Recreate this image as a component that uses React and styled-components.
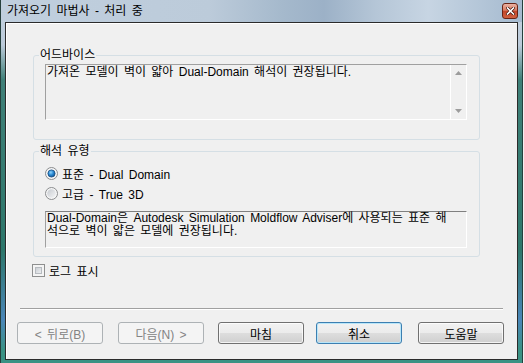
import React from 'react';
import styled, { createGlobalStyle } from 'styled-components';

const GlobalStyle = createGlobalStyle`
  html, body {
    margin: 0;
    padding: 0;
    background: #f0f0f0;
  }
  body {
    width: 524px;
    height: 363px;
    overflow: hidden;
    font-family: "Liberation Sans", "Noto Sans CJK KR", sans-serif;
    font-size: 12px;
    word-spacing: 2px;
    color: #000;
  }
`;

const Window = styled.div`
  width: 523px;
  height: 363px;
  box-sizing: border-box;
  border-left: 1px solid #26403d;
  border-right: 1px solid #26403d;
  background: linear-gradient(180deg, #c3d1df 0px, #bccbda 45px, #3f8078 80px, #2d776b 250px, #4a86b8 320px, #3a9284 350px);
  display: flex;
  flex-direction: column;
`;

const TitleBar = styled.div`
  height: 22px;
  flex-shrink: 0;
  display: flex;
  align-items: center;
  justify-content: space-between;
  padding: 0 4px 0 6px;
  background: linear-gradient(90deg, #c0cfde 0%, #bccbda 40%, #a5b9cc 54%, #9cb1c7 62%, #b5c6d7 72%, #c7d5e3 82%, #b4c6d8 92%, #a5bacf 100%);
`;

const Title = styled.span`
  font-size: 12px;
  line-height: 14px;
  color: #000;
  white-space: nowrap;
`;

const CloseButton = styled.div`
  width: 16px;
  height: 16px;
  box-sizing: border-box;
  border: 1px solid #6a2415;
  border-radius: 3px;
  background: linear-gradient(180deg, #eab3a4 0%, #d97a60 45%, #c4462a 52%, #d0603f 100%);
  display: flex;
  align-items: center;
  justify-content: center;
`;

const Client = styled.div`
  height: 338px;
  flex-shrink: 0;
  margin: 0 4px;
  box-sizing: border-box;
  border: 1px solid #2b2b2b;
`;

const ClientBody = styled.div`
  height: 100%;
  box-sizing: border-box;
  border-top: 1px solid #ffffff;
  border-left: 1px solid #ffffff;
  background: #f0f0f0;
  display: flex;
  flex-direction: column;
`;

const Group = styled.fieldset`
  width: 447px;
  box-sizing: border-box;
  margin: ${p => p.$top}px 0 0 26px;
  padding: ${p => p.$padTop}px 0 ${p => p.$padBottom}px 0;
  border: 1px solid #d5dfe5;
  border-radius: 3px;
  min-inline-size: 0;
`;

const Legend = styled.legend`
  margin-left: 5px;
  padding: 0 1px;
  font-size: 12px;
  line-height: 14px;
`;

const SunkenBox = styled.div`
  width: 422px;
  height: ${p => p.$height}px;
  margin: ${p => p.$top || 0}px 0 0 11px;
  box-sizing: border-box;
  border-top: 1px solid ${p => p.$dark ? '#808080' : '#a0a0a0'};
  border-left: 1px solid #a0a0a0;
  border-right: 1px solid #ffffff;
  border-bottom: 1px solid #ffffff;
  display: flex;
`;

const BoxText = styled.div`
  flex: 1;
  padding: ${p => p.$padTop}px 0 0 1px;
  font-size: 12px;
  line-height: 13px;
  white-space: nowrap;
`;

const TextLine = styled.div`
  height: 13px;
  line-height: 13px;
`;

const ScrollBar = styled.div`
  width: 16px;
  box-sizing: border-box;
  border-left: 1px solid #ffffff;
  display: flex;
  flex-direction: column;
  justify-content: space-between;
  align-items: center;
  padding: 6px 0 6px;
`;

const RadioRow = styled.label`
  height: 20px;
  margin-left: 11px;
  display: flex;
  align-items: center;
  gap: 4px;
  font-size: 12px;
`;

const CheckRow = styled.label`
  height: 13px;
  margin: 7px 0 0 25px;
  display: flex;
  align-items: center;
  gap: 4px;
  font-size: 12px;
`;

const CheckBox = styled.span`
  width: 13px;
  height: 13px;
  box-sizing: border-box;
  border: 1px solid #8e8f8f;
  background: #f4f4f4;
  padding: 2px;
  display: flex;
`;

const CheckInner = styled.span`
  flex: 1;
  border: 1px solid #b7bbc0;
  background: linear-gradient(135deg, #ccd0d5 0%, #eceef0 100%);
`;

const Separator = styled.div`
  width: 483px;
  margin: 31px 0 0 13px;
  border-top: 1px solid #a0a0a0;
  border-bottom: 1px solid #ffffff;
`;

const ButtonRow = styled.div`
  display: flex;
  margin-top: 12px;
`;

const Button = styled.div`
  width: 86px;
  height: 22px;
  margin-left: ${p => p.$gap}px;
  box-sizing: border-box;
  border-radius: 3px;
  display: flex;
  align-items: center;
  justify-content: center;
  font-size: 12px;
  border: 1px solid ${p => p.$disabled ? '#adb2b5' : p.$focused ? '#3c7fb1' : '#707070'};
  color: ${p => p.$disabled ? '#838383' : '#000'};
  background: ${p => p.$disabled
    ? '#f4f4f4'
    : 'linear-gradient(180deg, #f2f2f2 0%, #ebebeb 50%, #dddddd 51%, #cfcfcf 100%)'};
  box-shadow: ${p => p.$disabled
    ? 'none'
    : p.$focused
      ? 'inset 0 0 0 1px #b9e6f9'
      : 'inset 0 0 0 1px rgba(255,255,255,0.75)'};
`;

const CloseGlyph = () => (
  <svg width="9" height="8" viewBox="0 0 9 8">
    <path d="M1.5 1 L7.5 7 M7.5 1 L1.5 7" stroke="#3b0f07" strokeWidth="3" strokeLinecap="square" />
    <path d="M1.5 1 L7.5 7 M7.5 1 L1.5 7" stroke="#ffffff" strokeWidth="1.6" strokeLinecap="square" />
  </svg>
);

const Arrow = ({ up }) => (
  <svg width="7" height="4" viewBox="0 0 7 4">
    <path d={up ? 'M0 4 L3.5 0 L7 4 Z' : 'M0 0 L7 0 L3.5 4 Z'} fill="#9c9c9c" />
  </svg>
);

const RadioIcon = ({ checked }) => (
  <svg width="13" height="13" viewBox="0 0 13 13">
    <defs>
      <linearGradient id="radioFill" x1="0" y1="0" x2="1" y2="1">
        <stop offset="0" stopColor="#c6cacf" />
        <stop offset="1" stopColor="#f4f5f6" />
      </linearGradient>
      <radialGradient id="radioDot" cx="0.4" cy="0.35" r="0.7">
        <stop offset="0" stopColor="#8fd2fa" />
        <stop offset="0.5" stopColor="#2a8ad4" />
        <stop offset="1" stopColor="#0f4f8c" />
      </radialGradient>
    </defs>
    <circle cx="6.5" cy="6.5" r="6" fill="#f6f6f6" stroke="#8a8c8e" strokeWidth="1" />
    {checked
      ? <circle cx="6.5" cy="6.5" r="3.6" fill="url(#radioDot)" stroke="#1c4c7e" strokeWidth="0.8" />
      : <circle cx="6.5" cy="6.5" r="4.3" fill="url(#radioFill)" />}
  </svg>
);

export default function App() {
  return (
    <>
      <GlobalStyle />
      <Window>
        <TitleBar>
          <Title>가져오기 마법사 - 처리 중</Title>
          <CloseButton><CloseGlyph /></CloseButton>
        </TitleBar>
        <Client>
          <ClientBody>
            <Group $top={24} $padTop={2} $padBottom={19}>
              <Legend>어드바이스</Legend>
              <SunkenBox $height={56}>
                <BoxText $padTop={1}>
                  <TextLine>가져온 모델이 벽이 얇아 Dual-Domain 해석이 권장됩니다.</TextLine>
                </BoxText>
                <ScrollBar>
                  <Arrow up />
                  <Arrow />
                </ScrollBar>
              </SunkenBox>
            </Group>
            <Group $top={4} $padTop={5} $padBottom={8}>
              <Legend>해석 유형</Legend>
              <RadioRow>
                <RadioIcon checked />
                표준 - Dual Domain
              </RadioRow>
              <RadioRow>
                <RadioIcon />
                고급 - True 3D
              </RadioRow>
              <SunkenBox $height={37} $top={8} $dark>
                <BoxText $padTop={0}>
                  <TextLine>Dual-Domain은 Autodesk Simulation Moldflow Adviser에 사용되는 표준 해</TextLine>
                  <TextLine>석으로 벽이 얇은 모델에 권장됩니다.</TextLine>
                </BoxText>
              </SunkenBox>
            </Group>
            <CheckRow>
              <CheckBox><CheckInner /></CheckBox>
              로그 표시
            </CheckRow>
            <Separator />
            <ButtonRow>
              <Button $gap={10} $disabled>&lt; 뒤로(B)</Button>
              <Button $gap={15} $disabled>다음(N) &gt;</Button>
              <Button $gap={14}>마침</Button>
              <Button $gap={12} $focused>취소</Button>
              <Button $gap={16}>도움말</Button>
            </ButtonRow>
          </ClientBody>
        </Client>
      </Window>
    </>
  );
}
